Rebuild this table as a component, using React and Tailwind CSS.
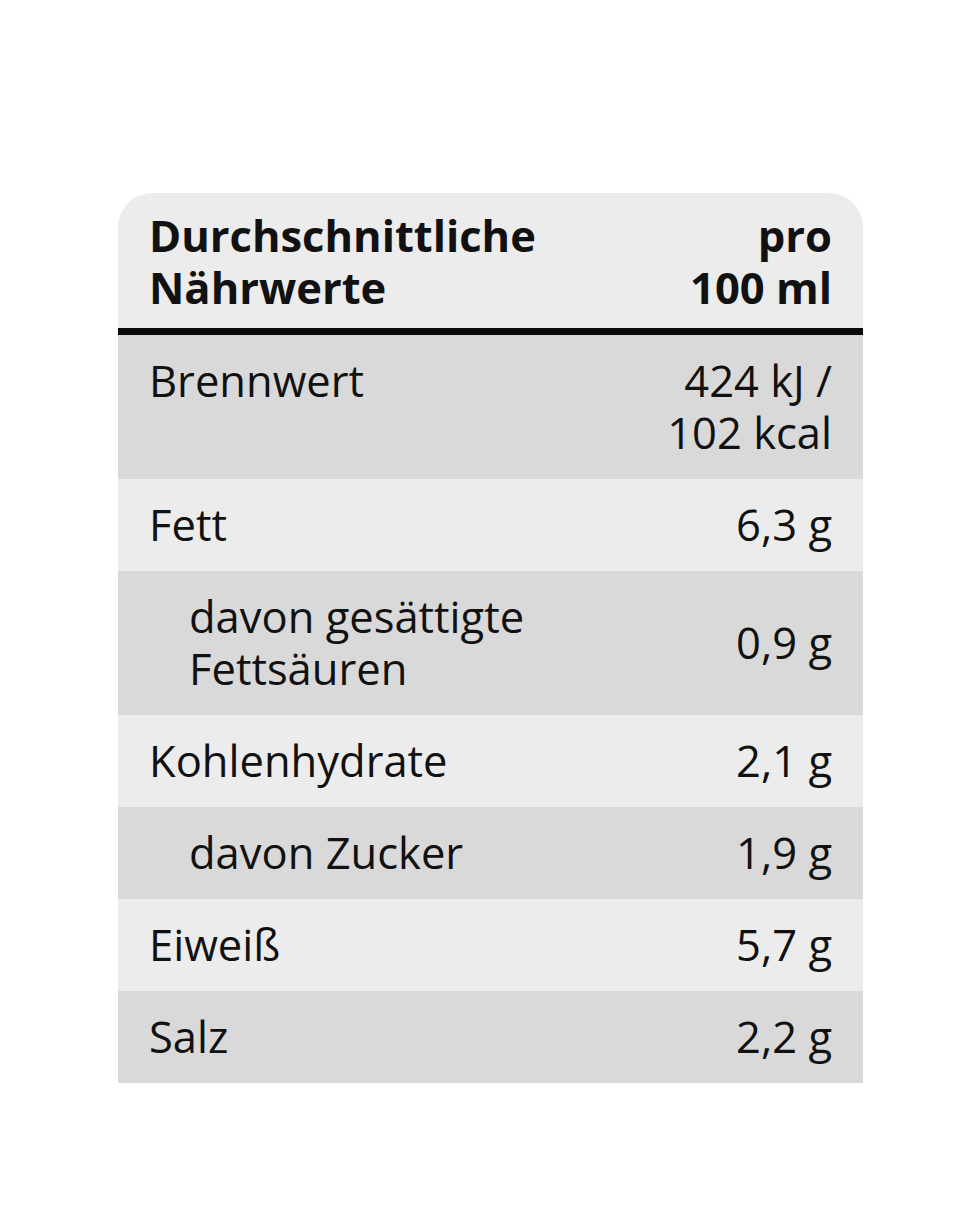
export default function App() {
  const rows = [
    { label: ["Brennwert"], value: ["424 kJ /", "102 kcal"], dark: true, align: "top" },
    { label: ["Fett"], value: ["6,3 g"], dark: false },
    { label: ["davon gesättigte", "Fettsäuren"], value: ["0,9 g"], dark: true, indent: true, align: "center" },
    { label: ["Kohlenhydrate"], value: ["2,1 g"], dark: false },
    { label: ["davon Zucker"], value: ["1,9 g"], dark: true, indent: true },
    { label: ["Eiweiß"], value: ["5,7 g"], dark: false },
    { label: ["Salz"], value: ["2,2 g"], dark: true },
  ];
  return (
    <div className="w-[980px] h-[1220px] bg-white pt-[193px] pl-[118px]" style={{ fontFamily: '"Open Sans", sans-serif' }}>
      <div className="w-[745px] text-[43.5px] leading-[52px] text-[#111111]">
        <div className="flex justify-between bg-[#ececec] rounded-t-[34px] pt-[17px] pb-[14px] px-[31px] border-b-[7px] border-[#0a0a0a] font-bold">
          <div>
            <div>Durchschnittliche</div>
            <div>Nährwerte</div>
          </div>
          <div className="text-right">
            <div>pro</div>
            <div>100 ml</div>
          </div>
        </div>
        {rows.map((r, i) => (
          <div
            key={i}
            className={`flex justify-between py-5 px-[31px] ${r.dark ? "bg-[#d9d9d9]" : "bg-[#ececec]"} ${r.align === "center" ? "items-center" : "items-start"}`}
          >
            <div className={r.indent ? "pl-10" : ""}>
              {r.label.map((l, j) => (
                <div key={j}>{l}</div>
              ))}
            </div>
            <div className="text-right">
              {r.value.map((v, j) => (
                <div key={j}>{v}</div>
              ))}
            </div>
          </div>
        ))}
      </div>
    </div>
  );
}
